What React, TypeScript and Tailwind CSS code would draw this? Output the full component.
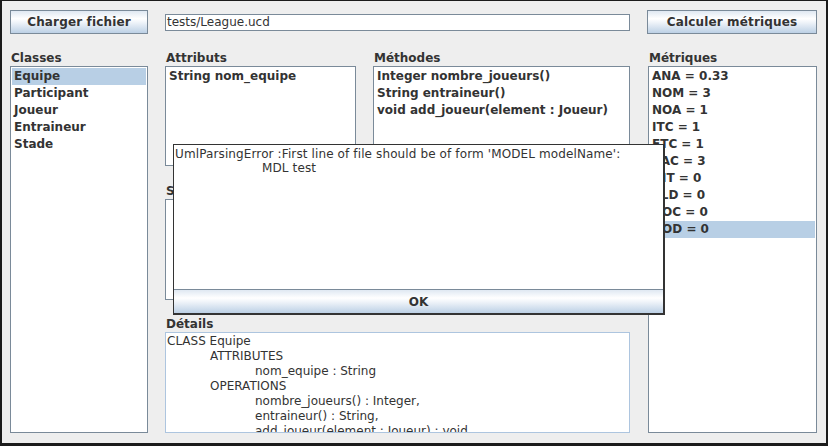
import type { ReactElement, ReactNode } from "react";

const classes = ["Equipe", "Participant", "Joueur", "Entraineur", "Stade"];
const attributs = ["String nom_equipe"];
const methodes = [
  "Integer nombre_joueurs()",
  "String entraineur()",
  "void add_joueur(element : Joueur)",
];
const metriques = [
  "ANA = 0.33",
  "NOM = 3",
  "NOA = 1",
  "ITC = 1",
  "ETC = 1",
  "CAC = 3",
  "DIT = 0",
  "CLD = 0",
  "NOC = 0",
  "NOD = 0",
];

// bouton style Metal/Ocean
function SwingButton({ label, className }: { label: string; className?: string }): ReactElement {
  return (
    <button
      className={
        "flex h-[24px] items-center justify-center border border-[#7a8a99] bg-[linear-gradient(to_bottom,#dfe8f2_0%,#ffffff_35%,#f1f5fa_50%,#bcd0e5_100%)] font-bold tracking-[0.15px] text-[#333333] " +
        (className ?? "")
      }
    >
      {label}
    </button>
  );
}

function Label({ children }: { children: ReactNode }): ReactElement {
  return <div className="h-[15px] whitespace-nowrap pl-px font-bold leading-[15px] text-[#333333]">{children}</div>;
}

function ListBox({
  items,
  selected,
  className,
}: {
  items: string[];
  selected?: number;
  className?: string;
}): ReactElement {
  return (
    <div className={"overflow-hidden border border-[#7a8a99] bg-white p-px " + (className ?? "")}>
      {items.map((it, i) => (
        <div
          key={it}
          className={
            "h-[17px] whitespace-nowrap pl-[2px] font-bold leading-[17px] text-[#333333] " +
            (i === selected ? "bg-[#b8cfe5]" : "")
          }
        >
          {it}
        </div>
      ))}
    </div>
  );
}

export default function App(): ReactElement {
  return (
    <div className="h-[446px] w-[828px] bg-[#1b1b1b] pb-[3px] pl-[2px] pr-[2px] pt-px font-['DejaVu_Sans',sans-serif] text-[12px]">
      <div className="relative h-full overflow-hidden bg-[#eeeeee] px-[8px] pt-[9px]">
        {/* barre du haut */}
        <div className="flex h-[24px] items-center">
          <SwingButton label="Charger fichier" className="w-[138px]" />
          <div className="ml-[17px] flex h-[17px] w-[465px] items-center border border-[#7a8a99] bg-white pl-px text-[#333333]">
            tests/League.ucd
          </div>
          <SwingButton label="Calculer métriques" className="ml-[17px] w-[170px]" />
        </div>

        {/* contenu */}
        <div className="mt-[17px] flex">
          <div className="w-[138px]">
            <Label>Classes</Label>
            <ListBox items={classes} selected={0} className="h-[367px]" />
          </div>

          <div className="ml-[17px] flex w-[465px] flex-col">
            <div className="flex gap-[17px]">
              <div className="w-[191px]">
                <Label>Attributs</Label>
                <ListBox items={attributs} className="h-[100px]" />
              </div>
              <div className="w-[257px]">
                <Label>Méthodes</Label>
                <ListBox items={methodes} className="h-[100px]" />
              </div>
            </div>
            <div className="mt-[18px] flex gap-[17px]">
              <div className="w-[191px]">
                <Label>Sous-classes</Label>
                <ListBox items={[]} className="h-[101px]" />
              </div>
              <div className="w-[257px]">
                <Label>Associations/agrégations</Label>
                <ListBox items={[]} className="h-[101px]" />
              </div>
            </div>
            <div className="mt-[17px]">
              <Label>Détails</Label>
              <div className="h-[101px] overflow-hidden border border-[#adc5df] bg-white pl-px pt-px leading-[15px] text-[#333333]">
                <div className="whitespace-nowrap">CLASS Equipe</div>
                <div className="whitespace-nowrap pl-[43px]">ATTRIBUTES</div>
                <div className="whitespace-nowrap pl-[88px]">nom_equipe : String</div>
                <div className="whitespace-nowrap pl-[43px]">OPERATIONS</div>
                <div className="whitespace-nowrap pl-[88px]">nombre_joueurs() : Integer,</div>
                <div className="whitespace-nowrap pl-[88px]">entraineur() : String,</div>
                <div className="whitespace-nowrap pl-[88px]">add_joueur(element : Joueur) : void</div>
              </div>
            </div>
          </div>

          <div className="ml-[18px] w-[169px]">
            <Label>Métriques</Label>
            <ListBox items={metriques} selected={9} className="h-[367px]" />
          </div>
        </div>

        {/* boîte d'erreur par-dessus */}
        <div className="absolute left-[171px] top-[143px] flex h-[171px] w-[492px] flex-col border border-b-2 border-r-2 border-[#333333] bg-white">
          <div className="flex-1 pl-px pt-[2px] leading-[14px] tracking-[0.12px] text-[#333333]">
            <div className="whitespace-nowrap">
              UmlParsingError :First line of file should be of form 'MODEL modelName':
            </div>
            <div className="whitespace-nowrap pl-[87px]">MDL test</div>
          </div>
          <button className="flex h-[24px] items-center justify-center border-t border-[#7a8a99] bg-[linear-gradient(to_bottom,#dfe8f2_0%,#ffffff_35%,#f1f5fa_50%,#bcd0e5_100%)] font-bold text-[#333333]">
            OK
          </button>
        </div>
      </div>
    </div>
  );
}
